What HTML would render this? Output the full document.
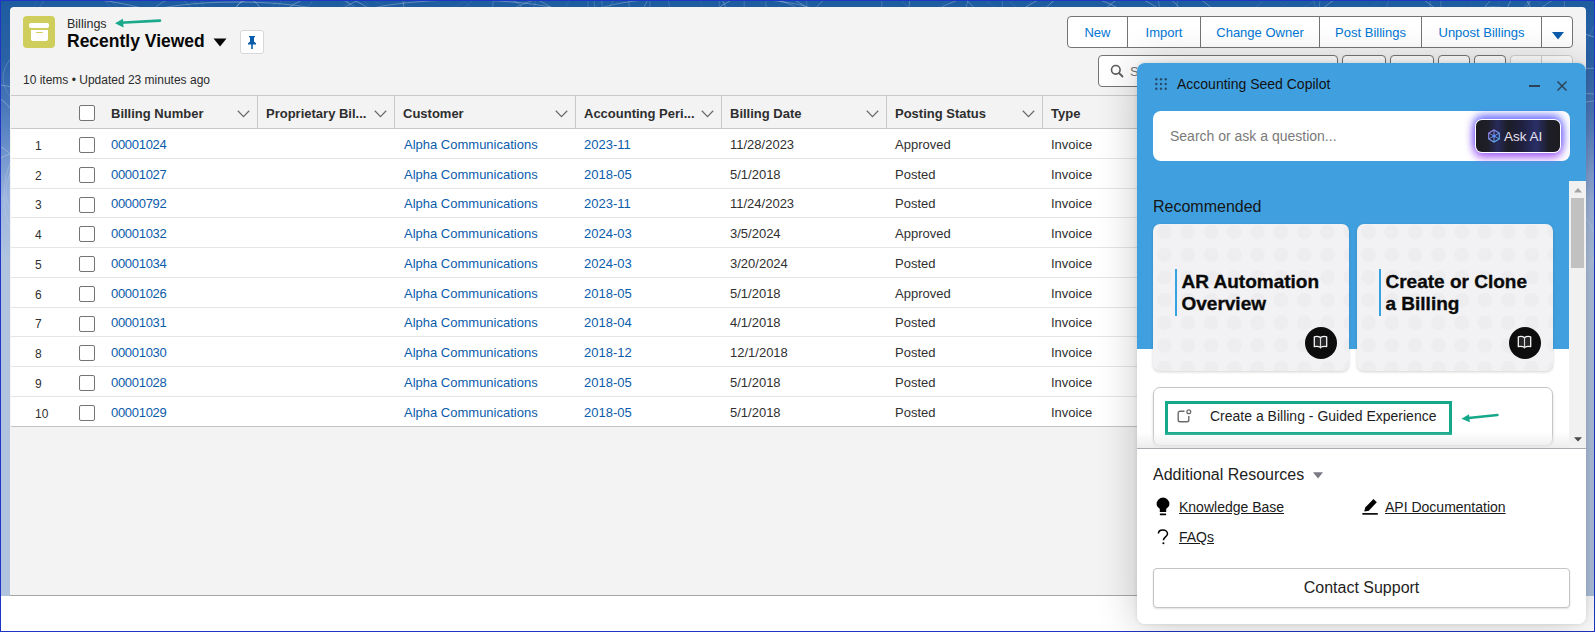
<!DOCTYPE html><html><head><meta charset="utf-8"><style>
*{box-sizing:border-box;margin:0;padding:0}
html,body{width:1595px;height:632px;overflow:hidden;background:#fff;font-family:"Liberation Sans",sans-serif}
.abs{position:absolute}
.t{position:absolute;white-space:nowrap;line-height:1}
.lnk{color:#0b5cab}
.txt{color:#303030}
.hdr{font-weight:bold;color:#2e2e2e;font-size:13px}
.cb{position:absolute;width:16px;height:16px;border:1px solid #747474;border-radius:2px;background:#fff}
.hl{position:absolute;height:1px;background:#e5e5e5}
.vl{position:absolute;width:1px;background:#c9c9c9}
.btn{position:absolute;top:16px;height:32px;border:1px solid #747474;background:#fff;color:#0176d3;font-size:13px;line-height:32px;text-align:center}
</style></head><body>
<div class="abs" style="left:0;top:0;width:1595px;height:632px;background:linear-gradient(180deg,#1d5c9f 0px,#2a62a6 60px,#5a84c4 130px,#9db5de 200px,#b0c4df 260px,#b0c4df 632px)"></div>
<svg class="abs" style="left:0;top:0" width="1595" height="300" viewBox="0 0 1595 300"><defs><linearGradient id="pf" x1="0" y1="0" x2="0" y2="1"><stop offset="0" stop-color="#fff" stop-opacity="0.3"/><stop offset="0.6" stop-color="#fff" stop-opacity="0.12"/><stop offset="1" stop-color="#fff" stop-opacity="0"/></linearGradient></defs><g fill="none" stroke="url(#pf)" stroke-width="1"><ellipse cx="328" cy="73" rx="72" ry="78"/><ellipse cx="1026" cy="-123" rx="22" ry="103"/><ellipse cx="367" cy="-54" rx="159" ry="64"/><ellipse cx="1406" cy="45" rx="109" ry="31"/><ellipse cx="1043" cy="206" rx="93" ry="93"/><ellipse cx="1109" cy="-124" rx="126" ry="77"/><ellipse cx="442" cy="-137" rx="141" ry="65"/><ellipse cx="1194" cy="210" rx="120" ry="112"/><ellipse cx="611" cy="178" rx="82" ry="113"/><ellipse cx="1482" cy="-110" rx="39" ry="38"/><ellipse cx="1638" cy="29" rx="108" ry="47"/><ellipse cx="813" cy="8" rx="69" ry="76"/><ellipse cx="952" cy="221" rx="115" ry="113"/><ellipse cx="1442" cy="256" rx="114" ry="32"/><ellipse cx="1449" cy="245" rx="147" ry="75"/><ellipse cx="1185" cy="-63" rx="136" ry="75"/><ellipse cx="413" cy="-124" rx="140" ry="119"/><ellipse cx="59" cy="178" rx="77" ry="31"/><ellipse cx="429" cy="165" rx="142" ry="20"/><ellipse cx="1006" cy="-132" rx="121" ry="50"/><ellipse cx="1486" cy="252" rx="91" ry="120"/><ellipse cx="457" cy="-118" rx="104" ry="18"/><ellipse cx="255" cy="17" rx="105" ry="31"/><ellipse cx="-24" cy="206" rx="64" ry="116"/><ellipse cx="1514" cy="5" rx="84" ry="70"/><ellipse cx="1059" cy="94" rx="98" ry="80"/><ellipse cx="1593" cy="58" rx="80" ry="91"/><ellipse cx="328" cy="-27" rx="157" ry="70"/><ellipse cx="887" cy="-145" rx="78" ry="76"/><ellipse cx="-64" cy="102" rx="109" ry="21"/><ellipse cx="1029" cy="41" rx="115" ry="52"/><ellipse cx="1173" cy="153" rx="23" ry="21"/><ellipse cx="1117" cy="245" rx="55" ry="63"/><ellipse cx="967" cy="-19" rx="71" ry="48"/><ellipse cx="564" cy="94" rx="62" ry="55"/><ellipse cx="1290" cy="-139" rx="100" ry="92"/><ellipse cx="458" cy="-59" rx="133" ry="40"/><ellipse cx="237" cy="28" rx="118" ry="26"/><ellipse cx="480" cy="-13" rx="137" ry="61"/><ellipse cx="1440" cy="-81" rx="67" ry="83"/><ellipse cx="1493" cy="35" rx="52" ry="28"/><ellipse cx="853" cy="-72" rx="133" ry="103"/><ellipse cx="230" cy="-36" rx="133" ry="82"/><ellipse cx="1351" cy="-8" rx="38" ry="46"/><ellipse cx="1329" cy="-39" rx="68" ry="59"/><ellipse cx="656" cy="18" rx="149" ry="31"/><ellipse cx="-92" cy="237" rx="143" ry="119"/><ellipse cx="682" cy="240" rx="150" ry="38"/><ellipse cx="1242" cy="193" rx="113" ry="69"/><ellipse cx="420" cy="-10" rx="52" ry="22"/><ellipse cx="960" cy="-32" rx="133" ry="20"/><ellipse cx="1526" cy="134" rx="149" ry="109"/><ellipse cx="1519" cy="87" rx="22" ry="93"/><ellipse cx="209" cy="-27" rx="113" ry="70"/><ellipse cx="645" cy="235" rx="106" ry="51"/><ellipse cx="354" cy="203" rx="87" ry="97"/><ellipse cx="533" cy="-69" rx="95" ry="101"/><ellipse cx="208" cy="175" rx="149" ry="100"/><ellipse cx="1382" cy="-147" rx="108" ry="106"/><ellipse cx="-10" cy="-39" rx="58" ry="70"/><ellipse cx="661" cy="44" rx="129" ry="15"/><ellipse cx="-1" cy="-98" rx="37" ry="22"/><ellipse cx="1654" cy="200" rx="32" ry="68"/><ellipse cx="469" cy="-21" rx="69" ry="83"/><ellipse cx="956" cy="-2" rx="47" ry="50"/><ellipse cx="123" cy="78" rx="120" ry="55"/><ellipse cx="44" cy="-77" rx="72" ry="78"/><ellipse cx="1309" cy="6" rx="132" ry="80"/><ellipse cx="677" cy="3" rx="89" ry="89"/><ellipse cx="657" cy="135" rx="85" ry="41"/><ellipse cx="865" cy="135" rx="30" ry="60"/><ellipse cx="667" cy="211" rx="151" ry="54"/><ellipse cx="1516" cy="174" rx="57" ry="64"/><ellipse cx="122" cy="183" rx="113" ry="108"/><ellipse cx="1326" cy="124" rx="123" ry="74"/><ellipse cx="86" cy="91" rx="21" ry="30"/><ellipse cx="1294" cy="-132" rx="33" ry="25"/><ellipse cx="1485" cy="-77" rx="23" ry="103"/><ellipse cx="118" cy="196" rx="114" ry="103"/><ellipse cx="1614" cy="87" rx="132" ry="19"/><ellipse cx="1281" cy="60" rx="120" ry="26"/><ellipse cx="1248" cy="233" rx="29" ry="49"/><ellipse cx="915" cy="190" rx="54" ry="34"/><ellipse cx="350" cy="103" rx="125" ry="56"/><ellipse cx="561" cy="13" rx="69" ry="59"/><ellipse cx="50" cy="55" rx="156" ry="58"/><ellipse cx="1245" cy="-84" rx="117" ry="94"/><ellipse cx="1113" cy="62" rx="88" ry="83"/><ellipse cx="1515" cy="-89" rx="33" ry="94"/><ellipse cx="1550" cy="62" rx="82" ry="90"/><ellipse cx="235" cy="-40" rx="48" ry="76"/><ellipse cx="467" cy="-55" rx="117" ry="115"/><ellipse cx="433" cy="139" rx="78" ry="105"/><ellipse cx="952" cy="-40" rx="50" ry="17"/><ellipse cx="763" cy="7" rx="44" ry="53"/><ellipse cx="480" cy="167" rx="40" ry="119"/><ellipse cx="763" cy="96" rx="86" ry="103"/><ellipse cx="1379" cy="78" rx="87" ry="91"/><ellipse cx="1442" cy="14" rx="123" ry="116"/><ellipse cx="741" cy="-56" rx="53" ry="90"/><ellipse cx="1116" cy="243" rx="140" ry="40"/><ellipse cx="241" cy="-44" rx="46" ry="89"/><ellipse cx="1445" cy="219" rx="56" ry="106"/><ellipse cx="464" cy="24" rx="122" ry="24"/><ellipse cx="67" cy="192" rx="61" ry="52"/><ellipse cx="945" cy="127" rx="21" ry="50"/><ellipse cx="685" cy="49" rx="49" ry="76"/><ellipse cx="1620" cy="10" rx="96" ry="28"/><ellipse cx="395" cy="123" rx="36" ry="108"/><ellipse cx="1536" cy="-110" rx="152" ry="54"/><ellipse cx="1290" cy="161" rx="61" ry="86"/><ellipse cx="1077" cy="180" rx="57" ry="94"/><ellipse cx="1630" cy="126" rx="95" ry="27"/><ellipse cx="789" cy="-6" rx="121" ry="86"/><ellipse cx="920" cy="-75" rx="110" ry="81"/><ellipse cx="222" cy="215" rx="112" ry="28"/><ellipse cx="1577" cy="-92" rx="66" ry="91"/><ellipse cx="975" cy="78" rx="111" ry="63"/><ellipse cx="462" cy="-78" rx="30" ry="90"/><ellipse cx="1258" cy="73" rx="124" ry="53"/><ellipse cx="379" cy="7" rx="142" ry="19"/><ellipse cx="808" cy="-49" rx="128" ry="52"/><ellipse cx="499" cy="15" rx="96" ry="96"/><ellipse cx="535" cy="197" rx="36" ry="43"/><ellipse cx="79" cy="-104" rx="129" ry="91"/><ellipse cx="233" cy="-72" rx="78" ry="93"/><ellipse cx="1368" cy="157" rx="103" ry="30"/><ellipse cx="617" cy="-71" rx="94" ry="75"/><ellipse cx="264" cy="-47" rx="129" ry="18"/><ellipse cx="1346" cy="215" rx="153" ry="55"/><ellipse cx="895" cy="89" rx="109" ry="118"/><ellipse cx="1136" cy="-27" rx="140" ry="66"/><ellipse cx="982" cy="148" rx="20" ry="96"/><ellipse cx="1091" cy="52" rx="93" ry="63"/><ellipse cx="248" cy="67" rx="25" ry="68"/><ellipse cx="1063" cy="32" rx="99" ry="116"/><ellipse cx="1506" cy="-94" rx="131" ry="80"/><ellipse cx="-9" cy="-2" rx="53" ry="23"/><ellipse cx="870" cy="231" rx="65" ry="106"/><ellipse cx="1150" cy="-95" rx="140" ry="78"/><ellipse cx="1569" cy="144" rx="124" ry="51"/><ellipse cx="1352" cy="232" rx="141" ry="61"/><ellipse cx="1262" cy="49" rx="35" ry="19"/><ellipse cx="40" cy="-68" rx="43" ry="67"/><ellipse cx="1159" cy="70" rx="79" ry="83"/><ellipse cx="448" cy="40" rx="126" ry="57"/><ellipse cx="225" cy="219" rx="121" ry="54"/><ellipse cx="568" cy="67" rx="104" ry="39"/><ellipse cx="-95" cy="-64" rx="130" ry="30"/><ellipse cx="728" cy="-70" rx="49" ry="33"/><ellipse cx="627" cy="-81" rx="24" ry="27"/><ellipse cx="203" cy="51" rx="28" ry="17"/><ellipse cx="706" cy="17" rx="118" ry="20"/><ellipse cx="626" cy="13" rx="24" ry="116"/><ellipse cx="294" cy="-111" rx="86" ry="32"/><ellipse cx="1020" cy="-8" rx="37" ry="20"/><ellipse cx="1210" cy="-37" rx="130" ry="64"/><ellipse cx="1579" cy="-27" rx="55" ry="43"/><ellipse cx="1366" cy="108" rx="68" ry="25"/><ellipse cx="1128" cy="247" rx="103" ry="15"/></g></svg>
<div class="abs" style="left:10px;top:7px;width:1576px;height:589px;background:#f3f3f3;border-radius:4px 4px 0 0;border-bottom:1.5px solid #a6a6a6"></div>
<div class="abs" style="left:0;top:596px;width:1595px;height:36px;background:#fff"></div>
<div class="abs" style="left:0;top:0;width:1595px;height:632px;border:1px solid #1f35c4"></div>
<div class="abs" style="left:23px;top:16px;width:32px;height:32px;background:#cfce5d;border-radius:4px"></div>
<div class="abs" style="left:29px;top:23px;width:20px;height:5px;background:#fff;border-radius:2px"></div>
<div class="abs" style="left:30.5px;top:30.2px;width:17px;height:10.6px;background:#fff;border-radius:0 0 2px 2px"></div>
<div class="abs" style="left:35.5px;top:31.5px;width:7px;height:1.7px;background:#cfce5d;border-radius:1px"></div>
<div class="t" style="left:67px;top:18px;font-size:12.5px;color:#2b2b2b">Billings</div>
<div class="t" style="left:67px;top:32.5px;font-size:17.5px;font-weight:bold;color:#080707">Recently Viewed</div>
<svg class="abs" style="left:213px;top:38px" width="14" height="9" viewBox="0 0 14 9"><path d="M0.5 0.5H13.5L7 8.5Z" fill="#080707"/></svg>
<div class="abs" style="left:240px;top:30px;width:24px;height:24px;background:#fff;border:1px solid #d8d8d8;border-radius:3px"></div>
<svg class="abs" style="left:246px;top:35px" width="12" height="14" viewBox="0 0 12 14"><path d="M3 1h6v1.2H8v4.3l2 1.8v1.2H6.8V14H5.2V9.5H2V8.3l2-1.8V2.2H3z" fill="#0b5cab"/></svg>
<svg class="abs" style="left:112px;top:15px" width="52" height="14" viewBox="0 0 52 14"><path d="M8 7.8L48 5.6" stroke="#1aa98b" stroke-width="2.6" stroke-linecap="round"/><path d="M3 8.3L11 3.8L11.5 12.5Z" fill="#1aa98b"/></svg>
<div class="t" style="left:23px;top:74px;font-size:12px;color:#2b2b2b">10 items &bull; Updated 23 minutes ago</div>
<div class="btn" style="left:1067px;width:61px;border-radius:4px 0 0 4px;">New</div>
<div class="btn" style="left:1127px;width:74px;">Import</div>
<div class="btn" style="left:1200px;width:120px;">Change Owner</div>
<div class="btn" style="left:1319px;width:103px;">Post Billings</div>
<div class="btn" style="left:1421px;width:121px;">Unpost Billings</div>
<div class="btn" style="left:1541px;width:32px;border-radius:0 4px 4px 0"></div>
<svg class="abs" style="left:1551.5px;top:31.5px" width="12" height="8" viewBox="0 0 12 8"><path d="M0 0H12L6 7.5Z" fill="#0b5cab"/></svg>
<div class="abs" style="left:1098px;top:55px;width:240px;height:32px;background:#fff;border:1px solid #747474;border-radius:4px"></div>
<svg class="abs" style="left:1110px;top:64px" width="14" height="14" viewBox="0 0 14 14"><circle cx="5.8" cy="5.8" r="4.3" stroke="#5c5c5c" stroke-width="1.6" fill="none"/><path d="M9 9L12.5 12.5" stroke="#5c5c5c" stroke-width="1.8" stroke-linecap="round"/></svg>
<div class="t" style="left:1130px;top:65px;font-size:13px;color:#747474">S</div>
<div class="abs" style="left:1342px;top:55px;width:44px;height:32px;background:#fff;border:1px solid #747474;border-radius:4px"></div>
<div class="abs" style="left:1390px;top:55px;width:44px;height:32px;background:#fff;border:1px solid #747474;border-radius:4px"></div>
<div class="abs" style="left:1438px;top:55px;width:32px;height:32px;background:#fff;border:1px solid #747474;border-radius:4px"></div>
<div class="abs" style="left:1474px;top:55px;width:32px;height:32px;background:#fff;border:1px solid #747474;border-radius:4px"></div>
<div class="abs" style="left:1510px;top:55px;width:63px;height:32px;background:#fff;border:1px solid #d0d0d0;border-radius:4px"></div>
<div class="abs" style="left:1541px;top:55px;width:1px;height:32px;background:#d0d0d0"></div>
<div class="abs" style="left:11px;top:95px;width:1126px;height:1px;background:#c9c9c9"></div>
<div class="abs" style="left:11px;top:128px;width:1126px;height:1px;background:#c9c9c9"></div>
<div class="abs" style="left:11px;top:129px;width:1126px;height:297px;background:#fff"></div>
<div class="hl" style="left:11px;top:158px;width:1126px;background:#e5e5e5"></div>
<div class="hl" style="left:11px;top:188px;width:1126px;background:#e5e5e5"></div>
<div class="hl" style="left:11px;top:217px;width:1126px;background:#e5e5e5"></div>
<div class="hl" style="left:11px;top:247px;width:1126px;background:#e5e5e5"></div>
<div class="hl" style="left:11px;top:277px;width:1126px;background:#e5e5e5"></div>
<div class="hl" style="left:11px;top:307px;width:1126px;background:#e5e5e5"></div>
<div class="hl" style="left:11px;top:336px;width:1126px;background:#e5e5e5"></div>
<div class="hl" style="left:11px;top:366px;width:1126px;background:#e5e5e5"></div>
<div class="hl" style="left:11px;top:396px;width:1126px;background:#e5e5e5"></div>
<div class="hl" style="left:11px;top:426px;width:1126px;background:#c4c4c4"></div>
<div class="vl" style="left:257px;top:96px;height:32px"></div>
<div class="vl" style="left:394px;top:96px;height:32px"></div>
<div class="vl" style="left:575px;top:96px;height:32px"></div>
<div class="vl" style="left:721px;top:96px;height:32px"></div>
<div class="vl" style="left:886px;top:96px;height:32px"></div>
<div class="vl" style="left:1042px;top:96px;height:32px"></div>
<div class="cb" style="left:79px;top:105px"></div>
<div class="t hdr" style="left:111px;top:107px">Billing Number</div>
<svg class="abs" style="left:237px;top:110px" width="13" height="8" viewBox="0 0 13 8"><path d="M0.8 0.8L6.5 6.6L12.2 0.8" stroke="#6b6b6b" stroke-width="1.3" fill="none"/></svg>
<div class="t hdr" style="left:266px;top:107px">Proprietary Bil...</div>
<svg class="abs" style="left:374px;top:110px" width="13" height="8" viewBox="0 0 13 8"><path d="M0.8 0.8L6.5 6.6L12.2 0.8" stroke="#6b6b6b" stroke-width="1.3" fill="none"/></svg>
<div class="t hdr" style="left:403px;top:107px">Customer</div>
<svg class="abs" style="left:555px;top:110px" width="13" height="8" viewBox="0 0 13 8"><path d="M0.8 0.8L6.5 6.6L12.2 0.8" stroke="#6b6b6b" stroke-width="1.3" fill="none"/></svg>
<div class="t hdr" style="left:584px;top:107px">Accounting Peri...</div>
<svg class="abs" style="left:701px;top:110px" width="13" height="8" viewBox="0 0 13 8"><path d="M0.8 0.8L6.5 6.6L12.2 0.8" stroke="#6b6b6b" stroke-width="1.3" fill="none"/></svg>
<div class="t hdr" style="left:730px;top:107px">Billing Date</div>
<svg class="abs" style="left:866px;top:110px" width="13" height="8" viewBox="0 0 13 8"><path d="M0.8 0.8L6.5 6.6L12.2 0.8" stroke="#6b6b6b" stroke-width="1.3" fill="none"/></svg>
<div class="t hdr" style="left:895px;top:107px">Posting Status</div>
<svg class="abs" style="left:1022px;top:110px" width="13" height="8" viewBox="0 0 13 8"><path d="M0.8 0.8L6.5 6.6L12.2 0.8" stroke="#6b6b6b" stroke-width="1.3" fill="none"/></svg>
<div class="t hdr" style="left:1051px;top:107px">Type</div>
<div class="t txt" style="left:35px;top:139.6px;font-size:12px">1</div>
<div class="cb" style="left:79px;top:137px"></div>
<div class="t lnk" style="left:111px;top:137.6px;font-size:13px;letter-spacing:-0.3px">00001024</div>
<div class="t lnk" style="left:404px;top:137.6px;font-size:13px">Alpha Communications</div>
<div class="t lnk" style="left:584px;top:137.6px;font-size:13px">2023-11</div>
<div class="t txt" style="left:730px;top:137.6px;font-size:13px">11/28/2023</div>
<div class="t txt" style="left:895px;top:137.6px;font-size:13px">Approved</div>
<div class="t txt" style="left:1051px;top:137.6px;font-size:13px">Invoice</div>
<div class="t txt" style="left:35px;top:169.6px;font-size:12px">2</div>
<div class="cb" style="left:79px;top:167px"></div>
<div class="t lnk" style="left:111px;top:167.6px;font-size:13px;letter-spacing:-0.3px">00001027</div>
<div class="t lnk" style="left:404px;top:167.6px;font-size:13px">Alpha Communications</div>
<div class="t lnk" style="left:584px;top:167.6px;font-size:13px">2018-05</div>
<div class="t txt" style="left:730px;top:167.6px;font-size:13px">5/1/2018</div>
<div class="t txt" style="left:895px;top:167.6px;font-size:13px">Posted</div>
<div class="t txt" style="left:1051px;top:167.6px;font-size:13px">Invoice</div>
<div class="t txt" style="left:35px;top:199.1px;font-size:12px">3</div>
<div class="cb" style="left:79px;top:197px"></div>
<div class="t lnk" style="left:111px;top:197.1px;font-size:13px;letter-spacing:-0.3px">00000792</div>
<div class="t lnk" style="left:404px;top:197.1px;font-size:13px">Alpha Communications</div>
<div class="t lnk" style="left:584px;top:197.1px;font-size:13px">2023-11</div>
<div class="t txt" style="left:730px;top:197.1px;font-size:13px">11/24/2023</div>
<div class="t txt" style="left:895px;top:197.1px;font-size:13px">Posted</div>
<div class="t txt" style="left:1051px;top:197.1px;font-size:13px">Invoice</div>
<div class="t txt" style="left:35px;top:228.6px;font-size:12px">4</div>
<div class="cb" style="left:79px;top:226px"></div>
<div class="t lnk" style="left:111px;top:226.6px;font-size:13px;letter-spacing:-0.3px">00001032</div>
<div class="t lnk" style="left:404px;top:226.6px;font-size:13px">Alpha Communications</div>
<div class="t lnk" style="left:584px;top:226.6px;font-size:13px">2024-03</div>
<div class="t txt" style="left:730px;top:226.6px;font-size:13px">3/5/2024</div>
<div class="t txt" style="left:895px;top:226.6px;font-size:13px">Approved</div>
<div class="t txt" style="left:1051px;top:226.6px;font-size:13px">Invoice</div>
<div class="t txt" style="left:35px;top:258.6px;font-size:12px">5</div>
<div class="cb" style="left:79px;top:256px"></div>
<div class="t lnk" style="left:111px;top:256.6px;font-size:13px;letter-spacing:-0.3px">00001034</div>
<div class="t lnk" style="left:404px;top:256.6px;font-size:13px">Alpha Communications</div>
<div class="t lnk" style="left:584px;top:256.6px;font-size:13px">2024-03</div>
<div class="t txt" style="left:730px;top:256.6px;font-size:13px">3/20/2024</div>
<div class="t txt" style="left:895px;top:256.6px;font-size:13px">Posted</div>
<div class="t txt" style="left:1051px;top:256.6px;font-size:13px">Invoice</div>
<div class="t txt" style="left:35px;top:288.6px;font-size:12px">6</div>
<div class="cb" style="left:79px;top:286px"></div>
<div class="t lnk" style="left:111px;top:286.6px;font-size:13px;letter-spacing:-0.3px">00001026</div>
<div class="t lnk" style="left:404px;top:286.6px;font-size:13px">Alpha Communications</div>
<div class="t lnk" style="left:584px;top:286.6px;font-size:13px">2018-05</div>
<div class="t txt" style="left:730px;top:286.6px;font-size:13px">5/1/2018</div>
<div class="t txt" style="left:895px;top:286.6px;font-size:13px">Approved</div>
<div class="t txt" style="left:1051px;top:286.6px;font-size:13px">Invoice</div>
<div class="t txt" style="left:35px;top:318.1px;font-size:12px">7</div>
<div class="cb" style="left:79px;top:316px"></div>
<div class="t lnk" style="left:111px;top:316.1px;font-size:13px;letter-spacing:-0.3px">00001031</div>
<div class="t lnk" style="left:404px;top:316.1px;font-size:13px">Alpha Communications</div>
<div class="t lnk" style="left:584px;top:316.1px;font-size:13px">2018-04</div>
<div class="t txt" style="left:730px;top:316.1px;font-size:13px">4/1/2018</div>
<div class="t txt" style="left:895px;top:316.1px;font-size:13px">Posted</div>
<div class="t txt" style="left:1051px;top:316.1px;font-size:13px">Invoice</div>
<div class="t txt" style="left:35px;top:347.6px;font-size:12px">8</div>
<div class="cb" style="left:79px;top:345px"></div>
<div class="t lnk" style="left:111px;top:345.6px;font-size:13px;letter-spacing:-0.3px">00001030</div>
<div class="t lnk" style="left:404px;top:345.6px;font-size:13px">Alpha Communications</div>
<div class="t lnk" style="left:584px;top:345.6px;font-size:13px">2018-12</div>
<div class="t txt" style="left:730px;top:345.6px;font-size:13px">12/1/2018</div>
<div class="t txt" style="left:895px;top:345.6px;font-size:13px">Posted</div>
<div class="t txt" style="left:1051px;top:345.6px;font-size:13px">Invoice</div>
<div class="t txt" style="left:35px;top:377.6px;font-size:12px">9</div>
<div class="cb" style="left:79px;top:375px"></div>
<div class="t lnk" style="left:111px;top:375.6px;font-size:13px;letter-spacing:-0.3px">00001028</div>
<div class="t lnk" style="left:404px;top:375.6px;font-size:13px">Alpha Communications</div>
<div class="t lnk" style="left:584px;top:375.6px;font-size:13px">2018-05</div>
<div class="t txt" style="left:730px;top:375.6px;font-size:13px">5/1/2018</div>
<div class="t txt" style="left:895px;top:375.6px;font-size:13px">Posted</div>
<div class="t txt" style="left:1051px;top:375.6px;font-size:13px">Invoice</div>
<div class="t txt" style="left:35px;top:407.6px;font-size:12px">10</div>
<div class="cb" style="left:79px;top:405px"></div>
<div class="t lnk" style="left:111px;top:405.6px;font-size:13px;letter-spacing:-0.3px">00001029</div>
<div class="t lnk" style="left:404px;top:405.6px;font-size:13px">Alpha Communications</div>
<div class="t lnk" style="left:584px;top:405.6px;font-size:13px">2018-05</div>
<div class="t txt" style="left:730px;top:405.6px;font-size:13px">5/1/2018</div>
<div class="t txt" style="left:895px;top:405.6px;font-size:13px">Posted</div>
<div class="t txt" style="left:1051px;top:405.6px;font-size:13px">Invoice</div>
<div class="abs" style="left:1137px;top:63px;width:449px;height:561px;border-radius:8px;background:#fff;box-shadow:0 0 4px rgba(0,0,0,0.1),0 2px 40px rgba(0,0,0,0.22);overflow:hidden">
 <div class="abs" style="left:0;top:0;width:449px;height:286px;background:#40a0df"></div>
 <svg class="abs" style="left:18px;top:15px" width="12" height="12" viewBox="0 0 12 12" fill="#27496b"><circle cx="1.3" cy="1.3" r="1.2"/><circle cx="6" cy="1.3" r="1.2"/><circle cx="10.7" cy="1.3" r="1.2"/><circle cx="1.3" cy="6" r="1.2"/><circle cx="6" cy="6" r="1.2"/><circle cx="10.7" cy="6" r="1.2"/><circle cx="1.3" cy="10.7" r="1.2"/><circle cx="6" cy="10.7" r="1.2"/><circle cx="10.7" cy="10.7" r="1.2"/></svg>
 <div class="t" style="left:40px;top:14px;font-size:14px;color:#111">Accounting Seed Copilot</div>
 <div class="abs" style="left:391.5px;top:22.2px;width:11.5px;height:1.6px;background:#2e4257"></div>
 <svg class="abs" style="left:419px;top:17px" width="12" height="12" viewBox="0 0 12 12"><path d="M1.5 1.5L10.5 10.5M10.5 1.5L1.5 10.5" stroke="#2e4257" stroke-width="1.45"/></svg>
 <div class="abs" style="left:16px;top:48px;width:417px;height:50px;background:#fff;border-radius:8px"></div>
 <div class="t" style="left:33px;top:66px;font-size:14px;color:#7a7a7a">Search or ask a question...</div>
 <div class="abs" style="left:339px;top:57px;width:84px;height:32px;border-radius:6px;background:linear-gradient(90deg,#1c1c20 0%,#1f1f28 14%,#272a5a 26%,#1d1d26 38%,#1f2040 55%,#2a2f68 72%,#1e1e28 86%,#1c1c20 100%);box-shadow:0 0 0 1px #fff,0 -4px 9px 1px rgba(90,100,255,0.75),0 5px 9px 1px rgba(175,85,245,0.75),-3px 0 8px rgba(150,90,240,0.5),3px 0 8px rgba(90,110,255,0.5)"></div>
 <svg class="abs" style="left:350px;top:66px" width="14" height="14" viewBox="0 0 14 14"><defs><linearGradient id="g1" x1="0" y1="0" x2="1" y2="1"><stop offset="0" stop-color="#a782f7"/><stop offset="1" stop-color="#4cb6f2"/></linearGradient></defs><path d="M7 1L12.3 4.1V9.9L7 13L1.7 9.9V4.1Z" stroke="url(#g1)" stroke-width="1.1" fill="none"/><path d="M7 1.3V12.7M2 4.3L12 9.7M12 4.3L2 9.7" stroke="url(#g1)" stroke-width="0.9" fill="none"/><circle cx="7" cy="7" r="1.6" fill="#5a8cff"/></svg>
 <div class="t" style="left:367px;top:66.5px;font-size:13.5px;color:#e8e2f4">Ask AI</div>
 <div class="abs" style="left:432px;top:118px;width:17px;height:267px;background:#f1f1f1"></div>
 <svg class="abs" style="left:437px;top:125px" width="8" height="5" viewBox="0 0 8 5"><path d="M0 4.5H8L4 0Z" fill="#a3a3a3"/></svg>
 <div class="abs" style="left:434px;top:135px;width:13px;height:70px;background:#c1c1c1"></div>
 <svg class="abs" style="left:437px;top:373.5px" width="8" height="5" viewBox="0 0 8 5"><path d="M0 0.3H8L4 4.6Z" fill="#4a4a4a"/></svg>
 <div class="t" style="left:16px;top:136px;font-size:16px;color:#151515">Recommended</div>
<div class="abs" style="left:16px;top:161px;width:196px;height:147px;border-radius:7px;background-color:#f2f2f4;background-image:radial-gradient(circle at 11.5px 8px,#ededf0 0,#ededf0 7px,transparent 7.6px);background-size:23.3px 22.7px;background-position:0 0;box-shadow:0 1px 3px rgba(0,0,0,0.18)"></div><div class="abs" style="left:38.3px;top:206px;width:2px;height:47px;background:#37a2e0"></div><div class="t" style="left:44.5px;top:208px;font-size:19px;font-weight:bold;color:#0a0a0a;line-height:22px;-webkit-text-stroke:0.35px #0a0a0a">AR Automation<br>Overview</div><div class="abs" style="left:168px;top:264px;width:32px;height:32px;border-radius:50%;background:#0d0d0d"></div><svg class="abs" style="left:176px;top:272px" width="15" height="15" viewBox="0 0 15 15"><path d="M1.3 1.8C3.3 1.3 5.8 1.4 7.5 2.6C9.2 1.4 11.7 1.3 13.7 1.8V11.6C11.7 11.2 9.2 11.4 7.5 12.3C5.8 11.4 3.3 11.2 1.3 11.6Z" stroke="#f4f4f4" stroke-width="1.3" fill="#262628" stroke-linejoin="round"/><path d="M7.5 2.6V12.3" stroke="#d8d8d8" stroke-width="1.2"/><path d="M6.3 12.2L7.5 13.8L8.7 12.2Z" fill="#f4f4f4"/></svg><div class="abs" style="left:220px;top:161px;width:196px;height:147px;border-radius:7px;background-color:#f2f2f4;background-image:radial-gradient(circle at 11.5px 8px,#ededf0 0,#ededf0 7px,transparent 7.6px);background-size:23.3px 22.7px;background-position:0 0;box-shadow:0 1px 3px rgba(0,0,0,0.18)"></div><div class="abs" style="left:242.3px;top:206px;width:2px;height:47px;background:#37a2e0"></div><div class="t" style="left:248.5px;top:208px;font-size:19px;font-weight:bold;color:#0a0a0a;line-height:22px;-webkit-text-stroke:0.35px #0a0a0a">Create or Clone<br>a Billing</div><div class="abs" style="left:372px;top:264px;width:32px;height:32px;border-radius:50%;background:#0d0d0d"></div><svg class="abs" style="left:380px;top:272px" width="15" height="15" viewBox="0 0 15 15"><path d="M1.3 1.8C3.3 1.3 5.8 1.4 7.5 2.6C9.2 1.4 11.7 1.3 13.7 1.8V11.6C11.7 11.2 9.2 11.4 7.5 12.3C5.8 11.4 3.3 11.2 1.3 11.6Z" stroke="#f4f4f4" stroke-width="1.3" fill="#262628" stroke-linejoin="round"/><path d="M7.5 2.6V12.3" stroke="#d8d8d8" stroke-width="1.2"/><path d="M6.3 12.2L7.5 13.8L8.7 12.2Z" fill="#f4f4f4"/></svg><div class="abs" style="left:16px;top:324px;width:400px;height:59px;border:1px solid #c6c6c6;border-radius:7px;background:#fff;box-shadow:0 2px 3px rgba(0,0,0,0.16)"></div><div class="abs" style="left:28px;top:338px;width:287px;height:34px;border:3px solid #16a88a"></div><svg class="abs" style="left:40px;top:346px" width="15" height="14" viewBox="0 0 15 14"><path d="M7.5 2.2H3A1.8 1.8 0 0 0 1.2 4V11A1.8 1.8 0 0 0 3 12.8H10A1.8 1.8 0 0 0 11.8 11V7" stroke="#6b6b6b" stroke-width="1.4" fill="none"/><circle cx="11.8" cy="2.8" r="1.9" stroke="#6b6b6b" stroke-width="1.3" fill="none"/></svg><div class="t" style="left:73px;top:346px;font-size:14px;color:#1e1e1e">Create a Billing - Guided Experience</div><svg class="abs" style="left:322px;top:348px" width="42" height="12" viewBox="0 0 42 12"><path d="M7 7.2L38.5 4" stroke="#16a88a" stroke-width="2.4" stroke-linecap="round"/><path d="M2.5 7.8L10 3.3L10.8 11.3Z" fill="#16a88a"/></svg><div class="abs" style="left:0;top:385px;width:449px;height:176px;background:#fff"></div><div class="abs" style="left:0;top:369px;width:432px;height:16px;background:linear-gradient(180deg,rgba(240,240,240,0),rgba(235,235,235,0.9))"></div><div class="abs" style="left:0;top:385px;width:449px;height:1px;background:#ababb2"></div><div class="t" style="left:16px;top:404px;font-size:16px;color:#222">Additional Resources</div><svg class="abs" style="left:175.5px;top:409px" width="10" height="7" viewBox="0 0 10 7"><path d="M0 0.2H10L5 6.5Z" fill="#7a7a84"/></svg><svg class="abs" style="left:19px;top:434px" width="14" height="19" viewBox="0 0 14 19"><path d="M0.6 7A6.4 6.4 0 1 1 13.4 7C13.4 9.2 12 10.6 10.2 11.8V15H3.8V11.8C2 10.6 0.6 9.2 0.6 7Z" fill="#000"/><rect x="3.8" y="16.4" width="6.4" height="1.8" rx="0.6" fill="#000"/></svg><div class="t" style="left:42px;top:437px;font-size:14px;color:#1a1a1a;text-decoration:underline">Knowledge Base</div><svg class="abs" style="left:225px;top:435px" width="17" height="18" viewBox="0 0 17 18"><path d="M11.5 1.1L14.8 4.2L6.8 12.7L2.3 13.5L3.2 9.4Z" fill="#000"/><rect x="0.1" y="15.1" width="15.9" height="1.7" rx="0.8" fill="#111"/></svg><div class="t" style="left:248px;top:437px;font-size:14px;color:#1a1a1a;text-decoration:underline">API Documentation</div><svg class="abs" style="left:20px;top:466px" width="12" height="16" viewBox="0 0 12 16"><path d="M1.4 4.6C1.4 2.4 3.4 0.9 5.9 0.9C8.4 0.9 10.5 2.5 10.5 4.7C10.5 7.6 6.4 8.1 6.4 11.2" stroke="#000" stroke-width="1.5" fill="none"/><circle cx="6.4" cy="14.2" r="1.05" fill="#000"/></svg><div class="t" style="left:42px;top:467px;font-size:14px;color:#1a1a1a;text-decoration:underline">FAQs</div><div class="abs" style="left:16px;top:505px;width:417px;height:40px;border:1px solid #c4c4c4;border-radius:4px;background:#fff;box-shadow:0 1px 2px rgba(0,0,0,0.12)"></div><div class="t" style="left:16px;top:517px;width:417px;text-align:center;font-size:16px;color:#1e1e1e">Contact Support</div>
</div>

</body></html>
